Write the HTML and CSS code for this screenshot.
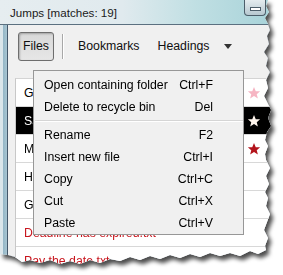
FILE: index.html
```html
<!DOCTYPE html>
<html>
<head>
    <meta charset="utf-8">
    <link rel="stylesheet" href="styles.css">
</head>
<body>

    <div class="shot">
        <div class="okno">
            <div class="titulok">
                <span class="nazov">Jumps [matches: 19]</span>
                <div class="minimalizuj"><span></span></div>
            </div>

            <div class="telo">
                <div class="obsah">
                    <div class="lista">
                        <div class="tlacidlo stlacene">Files</div>
                        <div class="oddelovac"></div>
                        <div class="tlacidlo">Bookmarks</div>
                        <div class="tlacidlo">Headings</div>
                        <div class="sipka"></div>
                    </div>

                    <div class="zoznam">
                        <div class="riadok"><span>Groceries.txt</span><svg class="hviezda ruzova" viewBox="0 0 24 24"><polygon points="12,1.5 15,8.8 22.5,9.2 16.7,14.1 18.6,21.5 12,17.3 5.4,21.5 7.3,14.1 1.5,9.2 9,8.8"/></svg></div>
                        <div class="riadok vybrany"><span>Sales report.txt</span><svg class="hviezda biela" viewBox="0 0 24 24"><polygon points="12,1.5 15,8.8 22.5,9.2 16.7,14.1 18.6,21.5 12,17.3 5.4,21.5 7.3,14.1 1.5,9.2 9,8.8"/></svg></div>
                        <div class="riadok"><span>Meeting notes.txt</span><svg class="hviezda cervena" viewBox="0 0 24 24"><polygon points="12,1.5 15,8.8 22.5,9.2 16.7,14.1 18.6,21.5 12,17.3 5.4,21.5 7.3,14.1 1.5,9.2 9,8.8"/></svg></div>
                        <div class="riadok"><span>Holiday plans.txt</span></div>
                        <div class="riadok"><span>Garden.txt</span></div>
                        <div class="riadok cerveny"><span>Deadline has expired.txt</span></div>
                        <div class="riadok cerveny"><span>Pay the date.txt</span></div>
                    </div>
                </div>
            </div>

            <div class="menu">
                <div class="polozka"><span>Open containing folder</span><span>Ctrl+F</span></div>
                <div class="polozka"><span>Delete to recycle bin</span><span>Del</span></div>
                <div class="ciara"></div>
                <div class="polozka"><span>Rename</span><span>F2</span></div>
                <div class="polozka"><span>Insert new file</span><span>Ctrl+I</span></div>
                <div class="polozka"><span>Copy</span><span>Ctrl+C</span></div>
                <div class="polozka"><span>Cut</span><span>Ctrl+X</span></div>
                <div class="polozka"><span>Paste</span><span>Ctrl+V</span></div>
            </div>
        </div>
    </div>

</body>
</html>
```

FILE: styles.css
```css
body {
    margin: 0;
    background-color: white;
    font-family: "Liberation Sans", Arial, sans-serif;
}

.shot {
    width: 283px;
    height: 275px;
    filter: drop-shadow(3px 4px 2px rgba(0, 0, 0, 0.7));
}

.okno {
    position: relative;
    width: 272px;
    height: 270px;
    display: flex;
    flex-direction: column;
    background-color: #f0f0f0;
    clip-path: polygon(0 0, 268px 0, 266px 6px, 269px 12px, 265px 18px, 268px 24px, 270px 30px, 267px 36px,
        269px 44px, 264px 52px, 268px 58px, 266px 66px, 270px 72px, 266px 80px, 268px 88px, 264px 96px,
        268px 104px, 271px 110px, 268px 118px, 271px 126px, 267px 132px, 265px 140px, 268px 146px,
        265px 154px, 266px 160px, 270px 168px, 266px 176px, 269px 184px, 265px 192px, 268px 198px,
        266px 206px, 270px 214px, 267px 222px, 264px 230px, 268px 238px, 265px 246px, 266px 250px,
        258px 254px, 250px 251px, 240px 256px, 230px 253px, 220px 256px, 210px 253px, 200px 257px,
        190px 254px, 180px 258px, 170px 255px, 160px 259px, 150px 256px, 140px 260px, 130px 257px,
        120px 261px, 110px 259px, 100px 263px, 90px 260px, 80px 264px, 70px 261px, 60px 264px,
        50px 260px, 40px 263px, 30px 260px, 22px 262px, 15px 257px, 8px 255px, 0 254px);
}

.titulok {
    height: 24px;
    flex: none;
    display: flex;
    align-items: flex-start;
    border-bottom: 1px solid #5b7080;
    background: linear-gradient(to right, #e6edf0 0%, #e0eaee 45%, #c0dfe3 72%, #a8d3d9 100%);
}

.nazov {
    padding-left: 10px;
    line-height: 26px;
    font-size: 11.6px;
    color: #1a1a1a;
}

.minimalizuj {
    margin-left: auto;
    margin-right: 6px;
    width: 20px;
    height: 15px;
    border: 1px solid #4c5e6a;
    border-top: none;
    border-radius: 0 0 4px 4px;
    background: linear-gradient(#e4ecef, #b7c8d0);
    display: flex;
    align-items: center;
    justify-content: center;
}

.minimalizuj span {
    width: 9px;
    height: 2px;
    margin-top: 2px;
    background-color: white;
    border: 1px solid #4c5e6a;
}

.telo {
    flex: 1;
    display: flex;
    padding-left: 8px;
    background: linear-gradient(to right, #dbe6eb 0, #dbe6eb 3px, #94b6c6 3px, #a9c6d3 7px, #44576a 7px, #44576a 8px);
}

.obsah {
    flex: 1;
    background-color: #f0f0f0;
}

.lista {
    height: 42px;
    display: flex;
    align-items: center;
    padding-left: 10px;
    font-size: 12.3px;
    color: #111;
}

.tlacidlo {
    margin-right: 18px;
}

.tlacidlo.stlacene {
    width: 34px;
    height: 27px;
    margin-right: 0;
    display: flex;
    align-items: center;
    justify-content: center;
    border: 1px solid #6e6e6e;
    border-radius: 3px;
    background: linear-gradient(#d9d9d9, #e6e6e6);
    box-shadow: inset 1px 1px 2px rgba(0, 0, 0, 0.25);
}

.oddelovac {
    width: 1px;
    height: 25px;
    margin: 0 14px 0 8px;
    background-color: #a8a8a8;
    border-right: 1px solid white;
}

.sipka {
    margin-left: -3px;
    width: 0;
    height: 0;
    border-left: 4px solid transparent;
    border-right: 4px solid transparent;
    border-top: 5px solid #333;
}

.zoznam {
    margin-top: 11px;
    margin-left: 7px;
    border-top: 1px solid #d4d4d4;
    border-left: 1px solid #c8c8c8;
    background-color: white;
    font-size: 12.3px;
}

.riadok {
    height: 27px;
    display: flex;
    align-items: center;
    padding-left: 8px;
    padding-right: 11px;
    border-bottom: 1px solid #d8d8d8;
    color: black;
}

.riadok span {
    flex: 1;
}

.riadok.vybrany {
    background-color: black;
    color: white;
}

.riadok.cerveny {
    color: #c8161e;
}

.hviezda {
    width: 14px;
    height: 14px;
}

.hviezda.ruzova {
    fill: #f6b5c3;
}

.hviezda.biela {
    fill: #fff6ee;
}

.hviezda.cervena {
    fill: #b3141c;
}

.menu {
    position: absolute;
    left: 33px;
    top: 70px;
    width: 211px;
    box-sizing: border-box;
    padding-top: 3px;
    background-color: #f0f0f0;
    border: 1px solid #979797;
    font-size: 12.3px;
    color: black;
}

.polozka {
    height: 22px;
    display: flex;
    align-items: center;
    justify-content: space-between;
    padding-left: 10px;
    padding-right: 30px;
}

.ciara {
    height: 1px;
    margin: 2px 0 2px 1px;
    background-color: #d5d5d5;
    border-bottom: 1px solid white;
}
```
